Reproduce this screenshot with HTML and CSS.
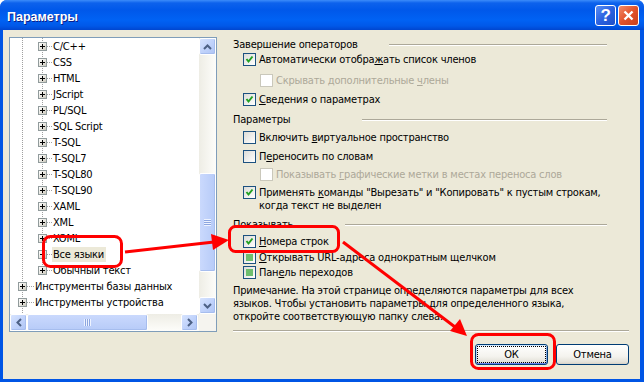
FILE: index.html
```html
<!DOCTYPE html>
<html lang="ru">
<head>
    <meta charset="UTF-8">
    <meta name="viewport" content="width=device-width, initial-scale=1.0">
    <title>Параметры</title>
    <link rel="stylesheet" href="styles.css">
</head>
<body>
<div class="window">
    <div class="titlebar">
        <span class="title">Параметры</span>
        <div class="caption-buttons">
            <span class="cap-btn help">?</span>
            <span class="cap-btn close">
                <svg width="13" height="13" viewBox="0 0 13 13"><path d="M2.5 2.5 L10.5 10.5 M10.5 2.5 L2.5 10.5" stroke="#fff" stroke-width="2.4"/></svg>
            </span>
        </div>
    </div>

    <div class="client">
        <!-- left tree -->
        <div class="tree-view">
            <div class="tree-main">
                <div class="tree-rows">
                    <ul class="tree level1">
                        <li>
                            <ul class="level2">
                                <li class="row"><span class="plus"></span><span class="dots"></span><span class="label">C/C++</span></li>
                                <li class="row"><span class="plus"></span><span class="dots"></span><span class="label">CSS</span></li>
                                <li class="row"><span class="plus"></span><span class="dots"></span><span class="label">HTML</span></li>
                                <li class="row"><span class="plus"></span><span class="dots"></span><span class="label">JScript</span></li>
                                <li class="row"><span class="plus"></span><span class="dots"></span><span class="label">PL/SQL</span></li>
                                <li class="row"><span class="plus"></span><span class="dots"></span><span class="label">SQL Script</span></li>
                                <li class="row"><span class="plus"></span><span class="dots"></span><span class="label">T-SQL</span></li>
                                <li class="row"><span class="plus"></span><span class="dots"></span><span class="label">T-SQL7</span></li>
                                <li class="row"><span class="plus"></span><span class="dots"></span><span class="label">T-SQL80</span></li>
                                <li class="row"><span class="plus"></span><span class="dots"></span><span class="label">T-SQL90</span></li>
                                <li class="row"><span class="plus"></span><span class="dots"></span><span class="label">XAML</span></li>
                                <li class="row"><span class="plus"></span><span class="dots"></span><span class="label">XML</span></li>
                                <li class="row"><span class="plus"></span><span class="dots"></span><span class="label">XOML</span></li>
                                <li class="row"><span class="plus"></span><span class="dots"></span><span class="label selected">Все языки</span></li>
                                <li class="row"><span class="plus"></span><span class="dots"></span><span class="label">Обычный текст</span></li>
                            </ul>
                        </li>
                        <li class="row top"><span class="plus"></span><span class="dots"></span><span class="label">Инструменты базы данных</span></li>
                        <li class="row top"><span class="plus"></span><span class="dots"></span><span class="label">Инструменты устройства</span></li>
                    </ul>
                </div>
                <div class="vscroll">
                    <span class="sb-btn"><svg width="9" height="6" viewBox="0 0 9 6"><path d="M1 5 L4.5 1.5 L8 5" fill="none" stroke="#4D6185" stroke-width="2"/></svg></span>
                    <span class="sb-track v-before"></span>
                    <span class="sb-thumb v-thumb"><span class="grip-h"></span></span>
                    <span class="sb-track v-after"></span>
                    <span class="sb-btn"><svg width="9" height="6" viewBox="0 0 9 6"><path d="M1 1 L4.5 4.5 L8 1" fill="none" stroke="#4D6185" stroke-width="2"/></svg></span>
                </div>
            </div>
            <div class="hscroll-row">
                <div class="hscroll">
                    <span class="sb-btn"><svg width="6" height="9" viewBox="0 0 6 9"><path d="M5 1 L1.5 4.5 L5 8" fill="none" stroke="#4D6185" stroke-width="2"/></svg></span>
                    <span class="sb-thumb h-thumb"><span class="grip-v"></span></span>
                    <span class="sb-track h-after"></span>
                    <span class="sb-btn"><svg width="6" height="9" viewBox="0 0 6 9"><path d="M1 1 L4.5 4.5 L1 8" fill="none" stroke="#4D6185" stroke-width="2"/></svg></span>
                </div>
                <div class="corner"></div>
            </div>
        </div>

        <!-- right options -->
        <div class="options">
            <div class="pane">
                <div class="group-title"><span>Завершение операторов</span><span class="rule rule-1"></span></div>
                <div class="check-row mt2"><span class="cb checked"></span><span>Автоматически отобра<u>ж</u>ать список членов</span></div>
                <div class="check-row sub disabled mt8"><span class="cb"></span><span>Скрывать дополнительные <u>ч</u>лены</span></div>
                <div class="check-row mt6"><span class="cb checked"></span><span><u>С</u>ведения о параметрах</span></div>

                <div class="group-title mt7"><span>Параметры</span><span class="rule rule-2"></span></div>
                <div class="check-row mt5"><span class="cb"></span><span>Включить <u>в</u>иртуальное пространство</span></div>
                <div class="check-row mt6"><span class="cb"></span><span>П<u>е</u>реносить по словам</span></div>
                <div class="check-row sub disabled mt5"><span class="cb"></span><span>Показывать <u>г</u>рафические метки в местах переноса слов</span></div>
                <div class="check-row mt5"><span class="cb checked"></span><span>Применять <u>к</u>оманды "Вырезать" и "Копировать" к пустым строкам,<br>когда текст не выделен</span></div>

                <div class="group-title mt6"><span>Показывать</span><span class="rule rule-3"></span></div>
                <div class="check-row mt4"><span class="cb checked"></span><span><u>Н</u>омера строк</span></div>
                <div class="check-row mt3"><span class="cb mixed"></span><span><u>О</u>ткрывать URL-адреса однократным щелчком</span></div>
                <div class="check-row mt2"><span class="cb mixed"></span><span>Пан<u>е</u>ль переходов</span></div>
                <p class="note">Примечание. На этой странице определяются параметры для всех<br>языков. Чтобы установить параметры для определенного языка,<br>откройте соответствующую папку слева.</p>
            </div>
            <div class="sep"></div>
            <div class="buttons">
                <button class="btn default"><span>ОК</span></button>
                <button class="btn"><span>Отмена</span></button>
            </div>
        </div>
    </div>

    <!-- red annotation marks drawn over the dialog -->
    <svg class="marks" width="644" height="382" viewBox="0 0 644 382">
        <g fill="none" stroke="#FF0000" stroke-width="3">
            <rect x="43.5" y="236.5" width="78" height="30" rx="7"/>
            <rect x="229.5" y="226.5" width="109" height="25" rx="6"/>
            <rect x="471.5" y="334.5" width="83" height="34" rx="7"/>
            <line x1="125" y1="252" x2="214" y2="242"/>
            <line x1="343" y1="242" x2="455" y2="327"/>
        </g>
        <g fill="#FF0000">
            <polygon points="229,240 211,234 213,250"/>
            <polygon points="467,336 450,331 460,319"/>
        </g>
    </svg>
</div>
</body>
</html>
```

FILE: styles.css
```css
* {
    box-sizing: border-box;
}

body {
    margin: 0;
    font-family: "DejaVu Sans Condensed", "Liberation Sans", sans-serif;
    font-size: 11px;
    letter-spacing: -0.2px;
    color: #000;
    background: #fff;
}

ul {
    list-style: none;
    margin: 0;
    padding: 0;
}

/* window frame */
.window {
    position: relative;
    width: 644px;
    height: 382px;
    display: flex;
    flex-direction: column;
    background: #0055E5;
    border-radius: 7px 7px 0 0;
    overflow: hidden;
}

.titlebar {
    height: 30px;
    flex: none;
    display: flex;
    align-items: center;
    justify-content: space-between;
    padding: 0 5px 0 7px;
    background: linear-gradient(to bottom, #3C8CFA 0px, #0D62EC 3px, #0058EA 10px, #0062F4 20px, #0058E8 26px, #0046CF 30px);
}

.title {
    color: #fff;
    font-family: "Liberation Sans", sans-serif;
    font-weight: bold;
    font-size: 12.5px;
    letter-spacing: 0;
    text-shadow: 1px 1px 0 #0A1E8A;
    padding-top: 3px;
}

.caption-buttons {
    display: flex;
    gap: 2px;
    padding-top: 1px;
}

.cap-btn {
    width: 21px;
    height: 21px;
    border: 1px solid #fff;
    border-radius: 3px;
    display: flex;
    align-items: center;
    justify-content: center;
    color: #fff;
}

.help {
    background: linear-gradient(135deg, #5A8EF5 0%, #2A62E0 50%, #1F4FC8 100%);
    font-family: "Liberation Sans", sans-serif;
    font-weight: bold;
    font-size: 17px;
}

.close {
    background: linear-gradient(135deg, #F28C6B 0%, #E2522A 50%, #C8401C 100%);
}

.client {
    flex: 1;
    min-height: 0;
    margin: 0 4px 3px 3px;
    background: #ECE9D8;
    display: flex;
    padding: 7px 11px 0 6px;
}

/* tree view */
.tree-view {
    flex: none;
    width: 208px;
    height: 295px;
    border: 1px solid #7F9DB9;
    background: #fff;
    display: flex;
    flex-direction: column;
}

.tree-main {
    flex: 1;
    display: flex;
    min-height: 0;
}

.tree-rows {
    flex: 1;
    overflow: hidden;
    background: repeating-linear-gradient(to bottom, #A0A0A0 0 1px, transparent 1px 2px) 12px 0 / 1px 100% no-repeat;
}

.level2 {
    background: repeating-linear-gradient(to bottom, #A0A0A0 0 1px, transparent 1px 2px) 32px 0 / 1px calc(100% - 8px) no-repeat;
}

.row {
    height: 16px;
    display: flex;
    align-items: center;
    padding-left: 28px;
    white-space: nowrap;
}

.row.top {
    padding-left: 8px;
}

.plus {
    flex: none;
    width: 9px;
    height: 9px;
    border: 1px solid #919B9C;
    background:
        linear-gradient(#000, #000) center / 5px 1px no-repeat,
        linear-gradient(#000, #000) center / 1px 5px no-repeat,
        linear-gradient(135deg, #fff 0%, #E4E2DA 60%, #C9C6BA 100%);
}

.dots {
    flex: none;
    width: 5px;
    height: 1px;
    background: repeating-linear-gradient(to right, #A0A0A0 0 1px, transparent 1px 2px);
}

.row.top .dots {
    width: 7px;
}

.label {
    padding: 1px 2px 1px 1px;
    line-height: 13px;
}

.label.selected {
    background: #ECE9D8;
}

/* scrollbars */
.vscroll {
    flex: none;
    width: 17px;
    display: flex;
    flex-direction: column;
    background: linear-gradient(to right, #EEEDE5, #FDFDFA);
}

.hscroll-row {
    flex: none;
    height: 17px;
    display: flex;
}

.hscroll {
    flex: 1;
    display: flex;
    background: linear-gradient(to bottom, #EEEDE5, #FDFDFA);
}

.corner {
    width: 17px;
    background: #F5F4EF;
}

.sb-btn {
    flex: none;
    width: 17px;
    height: 17px;
    border: 1px solid #fff;
    border-radius: 2px;
    background: linear-gradient(135deg, #D6E3FE 0%, #C1D3FB 50%, #AFC5F5 100%);
    box-shadow: inset -1px -1px 0 #A6BDEE;
    display: flex;
    align-items: center;
    justify-content: center;
}

.sb-track {
    flex: none;
}

.v-before { height: 118px; }
.v-after { height: 25px; }
.h-after { width: 33px; }

.sb-thumb {
    flex: none;
    border: 1px solid #fff;
    border-radius: 2px;
    box-shadow: inset -1px -1px 0 #A6BDEE;
    display: flex;
    align-items: center;
    justify-content: center;
}

.v-thumb {
    height: 99px;
    background: linear-gradient(to right, #CAD9FD, #B7CBF8);
}

.h-thumb {
    width: 121px;
    background: linear-gradient(to bottom, #CAD9FD, #B7CBF8);
}

.grip-h {
    width: 7px;
    height: 7px;
    background: repeating-linear-gradient(to bottom, #EEF3FF 0 1px, #8CA6E0 1px 2px);
}

.grip-v {
    width: 7px;
    height: 7px;
    background: repeating-linear-gradient(to right, #EEF3FF 0 1px, #8CA6E0 1px 2px);
}

/* options column */
.options {
    flex: 1;
    margin-left: 16px;
    display: flex;
    flex-direction: column;
    padding-top: 1px;
}

.pane {
    margin-right: 22px;
}

.group-title {
    display: flex;
    align-items: center;
    height: 13px;
    line-height: 13px;
    white-space: nowrap;
}

.rule {
    flex: 1;
    height: 2px;
    border-top: 1px solid #ACA899;
    border-bottom: 1px solid #fff;
}

.rule-1 { margin-left: 31px; }
.rule-2 { margin-left: 72px; }
.rule-3 { margin-left: 52px; }

.check-row {
    display: flex;
    align-items: flex-start;
    margin-left: 10px;
    line-height: 13px;
    white-space: nowrap;
}

.check-row.sub {
    margin-left: 27px;
}

.check-row.disabled {
    color: #ACA899;
}

.cb {
    flex: none;
    width: 13px;
    height: 13px;
    margin-right: 3px;
    border: 1px solid #1C5180;
    background: linear-gradient(135deg, #DCDCD7 0%, #fff 100%);
}

.disabled .cb {
    border-color: #CAC8BB;
    background: #fff;
}

.cb.checked {
    background:
        url("data:image/svg+xml,%3Csvg xmlns='http://www.w3.org/2000/svg' width='11' height='11'%3E%3Cpath d='M2.5 5 L4.5 7.5 L8.5 2.5' fill='none' stroke='%2321A121' stroke-width='2'/%3E%3C/svg%3E") center no-repeat,
        linear-gradient(135deg, #DCDCD7 0%, #fff 100%);
}

.cb.mixed {
    background:
        linear-gradient(#6EBE6E, #6EBE6E) center / 7px 7px no-repeat,
        linear-gradient(135deg, #DCDCD7 0%, #fff 100%);
}

u {
    text-decoration: underline;
    text-underline-offset: 1px;
}

.mt2 { margin-top: 2px; }
.mt3 { margin-top: 3px; }
.mt4 { margin-top: 4px; }
.mt5 { margin-top: 5px; }
.mt6 { margin-top: 6px; }
.mt7 { margin-top: 7px; }
.mt8 { margin-top: 8px; }

.note {
    margin: 5px 0 0 0;
    line-height: 13px;
    white-space: nowrap;
}

.sep {
    flex: none;
    margin-top: 7px;
    height: 2px;
    border-top: 1px solid #ACA899;
    border-bottom: 1px solid #fff;
}

.buttons {
    margin-top: 12px;
    display: flex;
    justify-content: flex-end;
    gap: 8px;
}

.btn {
    width: 73px;
    height: 21px;
    padding: 0;
    border: 1px solid #003C74;
    border-radius: 3px;
    background: linear-gradient(to bottom, #FFFFFF 0%, #F4F3EE 60%, #E3E1D8 90%, #D6D0C5 100%);
    font-family: inherit;
    font-size: 11px;
    letter-spacing: -0.2px;
    color: #000;
}

.btn.default {
    box-shadow: inset 0 1px 0 #CEE7FF, inset 0 -1px 0 #6982EE, inset 1px 0 0 #BCD4F6, inset -1px 0 0 #89ADE4;
}

.btn span {
    display: block;
    margin: 2px;
    line-height: 15px;
}

.btn.default span {
    outline: 1px dotted #000;
    outline-offset: 0;
}

.marks {
    position: absolute;
    top: 0;
    left: 0;
    pointer-events: none;
}
```
